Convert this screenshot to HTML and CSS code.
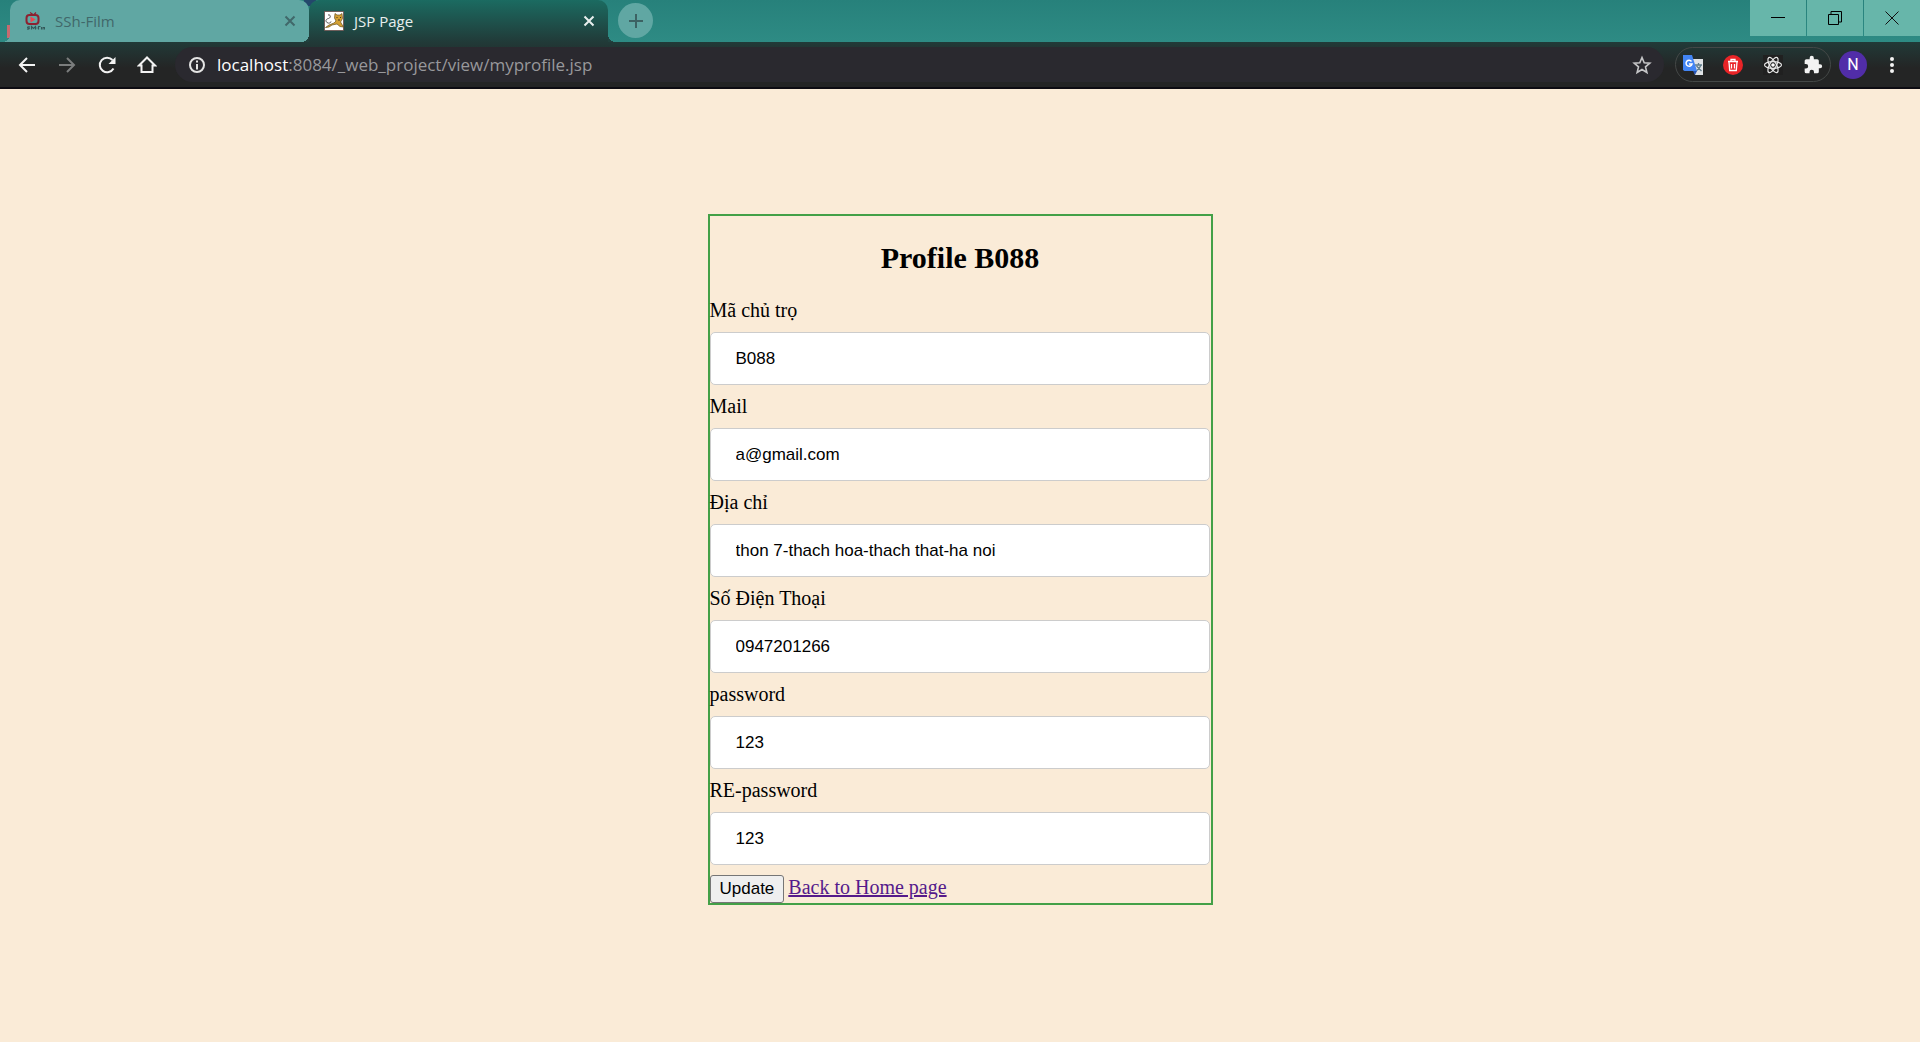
FILE: index.html
```html
<!DOCTYPE html>
<html lang="vi">
<head>
<meta charset="utf-8">
<title>JSP Page</title>
<link rel="stylesheet" href="styles.css">
</head>
<body>
<header class="browser">
  <div class="strip">
    <div class="tab tab-idle">
      <svg class="favicon" viewBox="0 0 20 20" aria-hidden="true"><path d="M5 1.500l3 2M11 1.500l-2 2" stroke="#8e2130" stroke-width="1.200" fill="none"/><rect x="1.500" y="4" width="12" height="9" rx="3" fill="none" stroke="#8e2130" stroke-width="2"/><path d="M5.500 5.500l5 3-5 3z" fill="#f0444f"/><path d="M5 16c-3-1-3 1-1.500 1s1 1.500-1.500 1M6.500 18.500V15.500l2 2 2-2v3M11.500 17h1M13.500 18.500v-3h2M16.500 16v2.500M18 18.500v-2h1.500v2" stroke="#34595a" stroke-width="1.100" fill="none"/></svg>
      <span class="tab-title">SSh-Film</span>
      <button class="close" aria-label="Close SSh-Film"><svg viewBox="0 0 12 12" width="12" height="12"><path d="M1.500 1.500l9 9M10.500 1.500l-9 9" stroke="currentColor" stroke-width="2"/></svg></button>
    </div>
    <div class="tab tab-active">
      <svg class="favicon" viewBox="0 0 20 20" aria-hidden="true"><path fill="#fff" stroke="#5b3c38" stroke-width=".8" d="M.4.400h19.200v19.200H.400z"/><path d="M1.500 16.500L5 14l5-2 2-2-1.500-3 .500-4.500 2 1.500h3l2-1.500.500 5-2 3.500 3 5-3.500-.500-3-2.500-5 1-3 2z" fill="#d3a033" stroke="#68511f" stroke-width=".7"/><path d="M4 4c3-1 3 3 .500 3.500S1 10 3 11.500s4 0 4-1" fill="none" stroke="#555" stroke-width="1"/><path d="M12.500 6.500h1M16 6.500h1M14 9h2" stroke="#403522"/></svg>
      <span class="tab-title">JSP Page</span>
      <button class="close" aria-label="Close JSP Page"><svg viewBox="0 0 12 12" width="12" height="12"><path d="M1.500 1.500l9 9M10.500 1.500l-9 9" stroke="currentColor" stroke-width="2"/></svg></button>
    </div>
    <button class="new-tab" aria-label="New tab"><svg viewBox="0 0 16 16" width="16" height="16"><path d="M8 1v14M1 8h14" stroke="#3c6263" stroke-width="2"/></svg></button>
    <div class="window-buttons">
      <button aria-label="Minimize"><svg viewBox="0 0 14 14" width="14" height="14"><path d="M0 6.500h14" stroke="#000"/></svg></button>
      <button aria-label="Restore"><svg viewBox="0 0 14 14" width="14" height="14"><path d="M.5 3.500h10v10H.500zM3 3V.500h10.500V11H11" fill="none" stroke="#000"/></svg></button>
      <button aria-label="Close"><svg viewBox="0 0 14 14" width="14" height="14"><path d="M.5.500l13 13M13.500.500l-13 13" stroke="#111"/></svg></button>
    </div>
  </div>
  <div class="toolbar">
    <button class="nav" aria-label="Back"><svg viewBox="0 0 20 20" width="20" height="20"><path d="M18 10H4M10 3l-7 7 7 7" fill="none" stroke="#f3f3f3" stroke-width="2"/></svg></button>
    <button class="nav" aria-label="Forward"><svg viewBox="0 0 20 20" width="20" height="20"><path d="M2 10h14M10 3l7 7-7 7" fill="none" stroke="#7b7d7d" stroke-width="2"/></svg></button>
    <button class="nav" aria-label="Reload"><svg viewBox="0 0 20 20" width="20" height="20"><path d="M16.500 13.500A7.300 7.300 0 1 1 15.500 5" fill="none" stroke="#f3f3f3" stroke-width="2"/><path d="M18.500 2v7h-7z" fill="#f3f3f3"/></svg></button>
    <button class="nav" aria-label="Home"><svg viewBox="0 0 20 20" width="20" height="20"><path d="M2 10.500l8-8 8 8h-2.500V17h-11v-6.500z" fill="none" stroke="#f3f3f3" stroke-width="2"/></svg></button>
    <div class="omnibox">
      <svg viewBox="0 0 18 18" width="18" height="18" aria-hidden="true"><circle cx="9" cy="9" r="7" fill="none" stroke="#e4e4e4" stroke-width="2"/><path d="M9 4.500v2M9 8v5.500" stroke="#e4e4e4" stroke-width="2"/></svg>
      <div class="url"><span class="host">localhost</span>:8084/_web_project/view/myprofile.jsp</div>
      <button class="star" aria-label="Bookmark"><svg viewBox="0 0 20 20" width="20" height="20"><path d="M10 2.500l2.200 5.300 5.600.4-4.300 3.700 1.400 5.600-4.900-3-4.900 3 1.400-5.600-4.300-3.700 5.600-.4z" fill="none" stroke="#c6c6c8" stroke-width="1.600"/></svg></button>
    </div>
    <div class="extensions">
      <button aria-label="Translate"><svg viewBox="0 0 20 20" width="20" height="20"><path d="M9 4h11v16h-8z" fill="#dfe2e5"/><path d="M12 10h7M15.500 8v2M18 10c-1 3-3 5-5 6M13.500 11l5 5" stroke="#607d8b" stroke-width="1.300" fill="none"/><path d="M0 0h9l5 16H1.500L0 15z" fill="#4285f4"/><path d="M10 16h4l-2 4z" fill="#2856b8"/><path d="M8.500 6.500A3 3 0 1 0 9 9H6" fill="none" stroke="#fff" stroke-width="1.500"/></svg></button>
      <button aria-label="Clear cache"><svg viewBox="0 0 20 20" width="20" height="20"><circle cx="10" cy="10" r="10" fill="#e92427"/><path d="M5 6.500h10M8 6V4.500h4V6M6 7l.7 8.500h6.600L14 7M8.500 9v4.500M11.500 9v4.500" fill="none" stroke="#fff" stroke-width="1.300"/></svg></button>
      <button aria-label="React tools"><svg viewBox="0 0 20 20" width="20" height="20"><path fill="#202020" d="M0 0h20v20H0z"/><g fill="none" stroke="#e9e9e9" stroke-width="1.200"><ellipse cx="10" cy="10" rx="8.500" ry="3.300"/><ellipse cx="10" cy="10" rx="8.500" ry="3.300" transform="rotate(60 10 10)"/><ellipse cx="10" cy="10" rx="8.500" ry="3.300" transform="rotate(120 10 10)"/></g><circle cx="10" cy="10" r="1.800" fill="#fff"/></svg></button>
      <button aria-label="Extensions"><svg viewBox="0 0 24 24" width="20" height="20"><path fill="#f3f3f3" d="M20.500 11H19V7a2 2 0 0 0-2-2h-4V3.500a2.500 2.500 0 0 0-5 0V5H4a2 2 0 0 0-2 2v3.800h1.500a2.700 2.700 0 0 1 0 5.400H2V20a2 2 0 0 0 2 2h3.800v-1.500a2.700 2.700 0 0 1 5.400 0V22H17a2 2 0 0 0 2-2v-4h1.500a2.500 2.500 0 0 0 0-5z"/></svg></button>
    </div>
    <button class="avatar" aria-label="Account">N</button>
    <button class="nav menu" aria-label="Menu"><svg viewBox="0 0 4 18" width="4" height="18"><g fill="#f3f3f3"><circle cx="2" cy="3" r="2"/><circle cx="2" cy="9" r="2"/><circle cx="2" cy="15" r="2"/></g></svg></button>
  </div>
</header>
<main class="page">
  <form class="profile">
    <h2>Profile B088</h2>
    <label for="owner">Mã chủ trọ</label>
    <input id="owner" type="text" value="B088">
    <label for="mail">Mail</label>
    <input id="mail" type="text" value="a@gmail.com">
    <label for="address">Địa chỉ</label>
    <input id="address" type="text" value="thon 7-thach hoa-thach that-ha noi">
    <label for="phone">Số Điện Thoại</label>
    <input id="phone" type="text" value="0947201266">
    <label for="password">password</label>
    <input id="password" type="text" value="123">
    <label for="repassword">RE-password</label>
    <input id="repassword" type="text" value="123">
    <div class="actions">
      <button class="update" type="button">Update</button>
      <a href="#home">Back to Home page</a>
    </div>
  </form>
</main>
</body>
</html>
```
FILE: styles.css
```css
* { box-sizing: border-box; }

body {
  margin: 0;
  min-height: 100vh;
  background: #faebd7;
  color: #000;
  font: 20px/23px "Liberation Serif", "Times New Roman", serif;
}

.browser {
  background: linear-gradient(#1b6b61 0, #213a38 42px, #242525 68px);
  border-bottom: 2px solid #0d0c12;
  font-family: "Open Sans", "Segoe UI", sans-serif;
}

.browser button {
  display: flex;
  align-items: center;
  justify-content: center;
  flex: none;
  padding: 0;
  border: 0;
  background: none;
  color: inherit;
}

.strip {
  display: flex;
  height: 42px;
  padding-left: 10px;
  background: linear-gradient(#23486b, #23486b) 304px 0 / 12px 6px no-repeat,
    linear-gradient(#c56b70, #c56b70) 7px 25px / 3px 13px no-repeat,
    linear-gradient(#27817b, #2e8b84);
}

.tab {
  position: relative;
  display: flex;
  align-items: center;
  flex: 0 1 299px;
  padding: 0 13px 0 15px;
  gap: 10px;
  font-size: 15px;
}

.tab-idle {
  background: #60a7a3;
  color: #40686a;
  border-radius: 10px 10px 0 0;
}

.tab-idle::before {
  content: "";
  position: absolute;
  left: -8px;
  bottom: 0;
  width: 8px;
  height: 8px;
  background: radial-gradient(circle at 0 0, transparent 8px, #60a7a3 8px);
}

.tab-active {
  background: linear-gradient(#1b6b61, #213a38);
  color: #e8efee;
  border-radius: 10px 10px 0 0;
}

.tab-active::before,
.tab-active::after {
  content: "";
  position: absolute;
  bottom: 0;
  width: 8px;
  height: 8px;
}

.tab-active::before {
  left: -8px;
  background: radial-gradient(circle at 0 0, transparent 8px, #21413e 8px);
}

.tab-active::after {
  right: -8px;
  background: radial-gradient(circle at 100% 0, transparent 8px, #21413e 8px);
}

.favicon {
  width: 20px;
  height: 20px;
  flex: none;
}

.tab-title { flex: 1; }

.new-tab {
  width: 35px;
  height: 35px;
  margin: 3px 0 0 10px;
}

.browser .new-tab {
  border-radius: 50%;
  background: #60a7a3;
}

.window-buttons {
  display: flex;
  gap: 1px;
  height: 36px;
  margin-left: auto;
}

.browser .window-buttons button {
  width: 56px;
  background: #67b6aa;
}

.toolbar {
  display: flex;
  align-items: center;
  height: 45px;
  padding: 0 8px 0 7px;
}

.nav {
  width: 40px;
  height: 40px;
}

.omnibox {
  display: flex;
  align-items: center;
  flex: 1;
  height: 35px;
  margin: 0 11px 0 8px;
  padding: 0 12px 0 13px;
  gap: 11px;
  border-radius: 18px;
  background: #2a292f;
}

.url {
  flex: 1;
  color: #98989b;
  font-size: 17px;
}

.host { color: #fff; }

.extensions {
  display: flex;
  align-items: center;
  gap: 20px;
  height: 35px;
  padding: 0 7px;
  border: 1px solid #444847;
  border-radius: 18px;
}

.browser .avatar {
  width: 28px;
  height: 28px;
  margin: 0 5px 0 8px;
  border-radius: 50%;
  background: #512da8;
  color: #fff;
  font: 16px/20px Roboto, sans-serif;
}

.page {
  display: flex;
  justify-content: center;
  padding: 125px 16px 32px;
}

.profile {
  width: 505px;
  border: 2px solid #43a047;
}

.profile h2 {
  margin: 25px 0 24px;
  font-size: 30px;
  line-height: 34px;
  text-align: center;
}

.profile label { display: block; }

.profile input {
  display: block;
  width: calc(100% - 1px);
  height: 53px;
  margin: 10px 0;
  padding: 0 25px;
  border: 1px solid #ccc;
  border-radius: 5px;
  background: #fff;
  color: #000;
  font: 17px/20px "Liberation Sans", Arial, sans-serif;
}

.actions {
  display: flex;
  align-items: baseline;
  gap: 4px;
}

.update {
  height: 28px;
  padding: 0 9px;
  border: 1px solid #767676;
  border-radius: 3px;
  background: #efefef;
  color: #000;
  font: 17px/20px "Liberation Sans", Arial, sans-serif;
}

.actions a { color: #551a8b; }
```
